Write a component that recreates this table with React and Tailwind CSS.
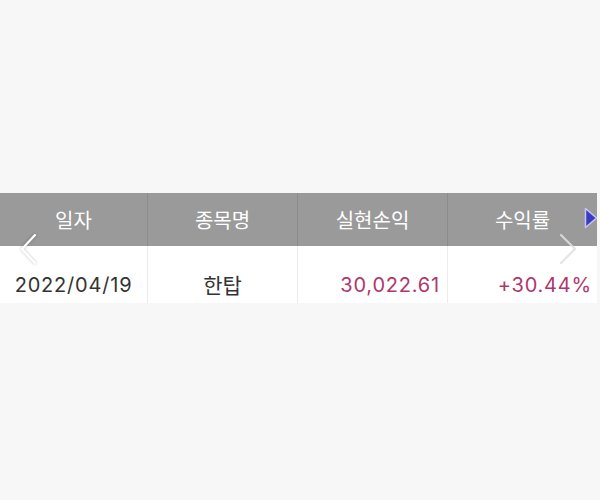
import React from "react";

const font = { fontFamily: '"Noto Sans CJK KR", "Noto Sans", sans-serif' };
const numFont = { fontFamily: 'Inter, "Noto Sans", sans-serif' };

export default function App() {
  const headers = ["일자", "종목명", "실현손익", "수익률"];
  return (
    <div className="w-[600px] h-[500px] bg-[#f7f7f7] pt-[193px]" style={font}>
      <div className="relative w-[597px]">
        <div className="grid grid-cols-[148px_150px_150px_149px] h-[53px] bg-[#9a9a9a]">
          {headers.map((h, i) => (
            <div
              key={h}
              className={`flex items-center justify-center text-white text-[20px] font-normal ${i < 3 ? "border-r border-[#8c8c8c]" : ""}`}
            >
              {h}
            </div>
          ))}
        </div>
        <div className="grid grid-cols-[148px_150px_150px_149px] h-[57px] bg-white text-[20px]">
          <div className="flex items-center justify-center pt-[20px] text-[#333] border-r border-[#ececec] tracking-[0.8px]" style={numFont}>
            2022/04/19
          </div>
          <div className="flex items-center justify-center pt-[20px] text-[#333] border-r border-[#ececec] text-[21px]">
            한탑
          </div>
          <div className="flex items-center justify-end pr-[7px] pt-[20px] text-[#b0376c] border-r border-[#ececec] tracking-[0.8px]" style={numFont}>
            30,022.61
          </div>
          <div className="flex items-center justify-end pr-[5px] pt-[20px] text-[#b0376c] tracking-[0.8px]" style={numFont}>
            +30.44%
          </div>
        </div>
        {/* left chevron */}
        <svg className="absolute left-[18px] top-[40px]" width="22" height="34" viewBox="0 0 22 34" style={{ filter: "drop-shadow(0 0 1.5px rgba(0,0,0,0.25))" }}>
          <path d="M17 2 L4 16 L17 30" fill="none" stroke="#ffffff" strokeWidth="2.2" strokeLinecap="round" />
        </svg>
        {/* right chevron */}
        <svg className="absolute left-[557px] top-[40px]" width="22" height="34" viewBox="0 0 22 34">
          <path d="M4 2 L18 16 L4 30" fill="none" stroke="rgba(225,225,225,0.85)" strokeWidth="2.2" strokeLinecap="round" />
        </svg>
        {/* blue triangle */}
        <svg className="absolute left-[584px] top-[14px]" width="14" height="22" viewBox="0 0 14 22">
          <path d="M1.5 1.5 L12.5 11 L1.5 20.5 Z" fill="#3b3bc4" stroke="#c9c6ee" strokeWidth="1.5" strokeLinejoin="round" />
        </svg>
      </div>
    </div>
  );
}
